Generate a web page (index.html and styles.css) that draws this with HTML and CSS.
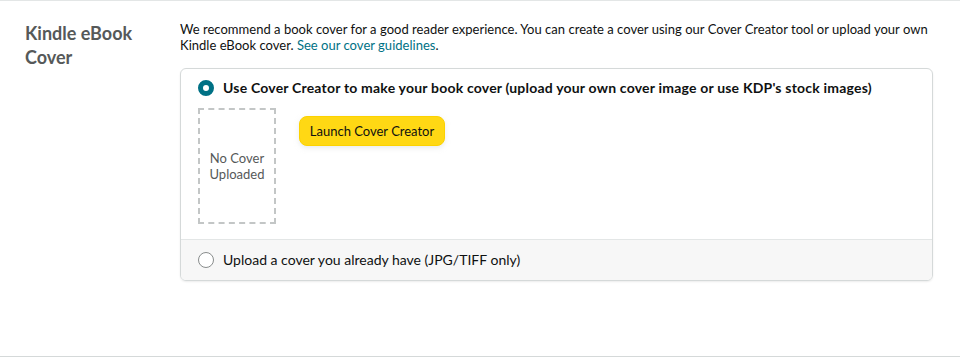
FILE: index.html
```html
<!DOCTYPE html>
<html>
    <head>
        <link rel="stylesheet" href="styles.css">
    </head>
    <body>
        <div id="cover-section">
            <div class="section-label">Kindle eBook Cover</div>
            <div class="section-body">
                <p class="intro">We recommend a book cover for a good reader experience. You can create a cover using our Cover Creator tool or upload your own Kindle eBook cover. <a href="#">See our cover guidelines</a>.</p>
                <div class="cover-card">
                    <div class="option option-creator">
                        <label class="radio-row">
                            <span class="radio checked"></span>
                            <span class="radio-text bold">Use Cover Creator to make your book cover (upload your own cover image or use KDP's stock images)</span>
                        </label>
                        <div class="creator-body">
                            <div class="cover-preview">No Cover Uploaded</div>
                            <div class="launch-btn">Launch Cover Creator</div>
                        </div>
                    </div>
                    <div class="option option-upload">
                        <label class="radio-row">
                            <span class="radio"></span>
                            <span class="radio-text">Upload a cover you already have (JPG/TIFF only)</span>
                        </label>
                    </div>
                </div>
            </div>
        </div>
    </body>
</html>
```

FILE: styles.css
```css
body{
    margin:0;
    font-family: 'Lato', sans-serif;
    color:#0f1111;
    background-color:#fff;
}

#cover-section{
    display:flex;
    height:357px;
    box-sizing:border-box;
    border-top:1px solid #e3e6e6;
    border-bottom:1px solid #d5d9d9;
    padding-top:20px;
}

.section-label{
    width:180px;
    box-sizing:border-box;
    padding-left:25px;
    padding-right:30px;
    font-size:18px;
    line-height:24px;
    font-weight:700;
    color:#565959;
}

.section-body{
    width:753px;
}

.intro{
    margin:0 0 15px;
    font-size:13px;
    line-height:16px;
    letter-spacing:0.02px;
    color:#0f1111;
}

.intro a{
    color:#007185;
    text-decoration:none;
}

.cover-card{
    border:1px solid #d5d9d9;
    border-radius:6px;
    overflow:hidden;
    box-shadow:0 1px 2px rgba(15,17,17,0.08);
}

.option-creator{
    padding:11px 17px 15px;
    border-bottom:1px solid #e3e6e6;
}

.radio-row{
    display:flex;
    align-items:center;
    gap:9px;
    height:16px;
}

.radio{
    width:16px;
    height:16px;
    box-sizing:border-box;
    border:1px solid #888c8c;
    border-radius:50%;
    background-color:#fff;
    flex-shrink:0;
}

.radio.checked{
    border:5px solid #007185;
}

.radio-text{
    font-size:14px;
    line-height:16px;
    color:#0f1111;
}

.radio-text.bold{
    font-weight:700;
    letter-spacing:0.2px;
}

.creator-body{
    display:flex;
    align-items:flex-start;
    gap:23px;
    margin-top:12px;
}

.cover-preview{
    width:78px;
    height:116px;
    box-sizing:border-box;
    border:2px dashed #c3c6c6;
    display:flex;
    align-items:center;
    justify-content:center;
    text-align:center;
    font-size:13px;
    line-height:16px;
    color:#565959;
}

.launch-btn{
    margin-top:8px;
    width:146px;
    height:30px;
    box-sizing:border-box;
    border-radius:8px;
    background-color:#ffd814;
    border:1px solid #fcd200;
    font-size:13px;
    line-height:28px;
    text-align:center;
    color:#0f1111;
    box-shadow:0 2px 5px rgba(213,217,217,0.5);
}

.option-upload{
    background-color:#f7f7f7;
    padding:12px 17px;
}
```
